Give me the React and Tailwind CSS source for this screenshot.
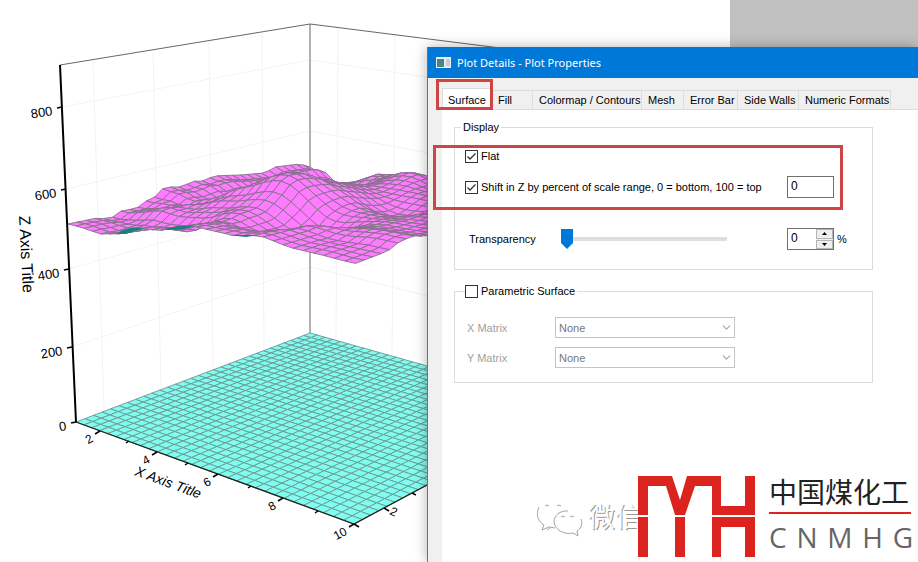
import { useState } from 'react';
import { ChevronDown } from 'lucide-react';

const CELLS = 31;

// Corners of the plot floor on screen: left, front, right, back
const LEFT = [76, 422];
const FRONT = [354, 524];
const RIGHT = [573, 407];
const BACK = [310, 333];

// Unit square -> floor quad (projective mapping)
const makeProjection = (p0, p1, p2, p3) => {
  const dx1 = p1[0] - p2[0];
  const dx2 = p3[0] - p2[0];
  const dy1 = p1[1] - p2[1];
  const dy2 = p3[1] - p2[1];
  const sx = p0[0] - p1[0] + p2[0] - p3[0];
  const sy = p0[1] - p1[1] + p2[1] - p3[1];
  const det = dx1 * dy2 - dx2 * dy1;
  const g = (sx * dy2 - dx2 * sy) / det;
  const h = (dx1 * sy - sx * dy1) / det;
  return (u, v) => {
    const w = g * u + h * v + 1;
    return [
      ((p1[0] - p0[0] + g * p1[0]) * u + (p3[0] - p0[0] + h * p3[0]) * v + p0[0]) / w,
      ((p1[1] - p0[1] + g * p1[1]) * u + (p3[1] - p0[1] + h * p3[1]) * v + p0[1]) / w,
    ];
  };
};

const floor = makeProjection(LEFT, FRONT, RIGHT, BACK);

// Surface outline along each side of the box
const edges = {
  leftFront: [[68, 224], [80, 227], [100, 234], [120, 234], [140, 228], [158, 231], [175, 228], [192, 226], [212, 231], [235, 236], [260, 236], [290, 248], [320, 255], [354, 264]],
  frontRight: [[354, 264], [388, 251], [400, 241], [414, 236], [427, 236], [573, 200]],
  leftBack: [[68, 224], [97, 218], [111, 219], [116, 213], [124, 210], [136, 209], [144, 202], [157, 196], [164, 187], [180, 187], [195, 181], [206, 181], [212, 176], [240, 175], [265, 173], [275, 167], [300, 164], [310, 167]],
  backRight: [[310, 167], [316, 172], [325, 172], [333, 180], [341, 187], [365, 188], [377, 182], [392, 176], [427, 180], [573, 200]],
};

const sample = (line, x) => {
  for (let i = 1; i < line.length; i++) {
    if (x <= line[i][0]) {
      const [x0, y0] = line[i - 1];
      const [x1, y1] = line[i];
      return y0 + ((y1 - y0) * (x - x0)) / (x1 - x0);
    }
  }
  return line[line.length - 1][1];
};

const leanX = (x) => x + (x - 310) * 0.034;

const edgeLift = (line, u, v) => {
  const [x, y] = floor(u, v);
  return y - sample(line, leanX(x));
};

// Hills and dips: centre on the floor, spread, height
const bumps = [
  { x: 290, y: 416, sx: 50, sy: 17, h: 23 },
  { x: 310, y: 452, sx: 62, sy: 16, h: -22 },
  { x: 175, y: 410, sx: 36, sy: 12, h: 12 },
  { x: 185, y: 438, sx: 36, sy: 12, h: -8 },
  { x: 412, y: 386, sx: 30, sy: 15, h: 9 },
  { x: 395, y: 424, sx: 40, sy: 14, h: -17 },
  { x: 325, y: 356, sx: 14, sy: 8, h: 6 },
  { x: 352, y: 374, sx: 18, sy: 10, h: -9 },
];

const surface = (u, v) => {
  const [x, y] = floor(u, v);
  const c00 = edgeLift(edges.leftFront, 0, 0);
  const c10 = edgeLift(edges.leftFront, 1, 0);
  const c01 = edgeLift(edges.leftBack, 0, 1);
  const c11 = edgeLift(edges.backRight, 1, 1);
  let lift =
    (1 - v) * edgeLift(edges.leftFront, u, 0) + v * edgeLift(edges.backRight, u, 1) +
    (1 - u) * edgeLift(edges.leftBack, 0, v) + u * edgeLift(edges.frontRight, 1, v) -
    ((1 - u) * (1 - v) * c00 + u * (1 - v) * c10 + (1 - u) * v * c01 + u * v * c11);
  const taper = Math.min(1, 8 * u, 8 * v, 8 * (1 - u), 8 * (1 - v));
  bumps.forEach((b) => {
    lift += taper * b.h * Math.exp(-(((x - b.x) / b.sx) ** 2) - ((y - b.y) / b.sy) ** 2);
  });
  lift += taper * 2 * Math.sin(u * 23 + v * 7) * Math.cos(v * 19);
  return [leanX(x), y - lift];
};

const toPoints = (pts) => pts.map(([x, y]) => `${x.toFixed(1)},${y.toFixed(1)}`).join(' ');

const buildCells = (fn) => {
  const cells = [];
  for (let j = CELLS - 1; j >= 0; j--) {
    for (let i = 0; i < CELLS; i++) {
      const [u0, u1, v0, v1] = [i / CELLS, (i + 1) / CELLS, j / CELLS, (j + 1) / CELLS];
      cells.push(toPoints([fn(u0, v0), fn(u1, v0), fn(u1, v1), fn(u0, v1)]));
    }
  }
  return cells;
};

const floorCells = buildCells(floor);
const surfaceCells = buildCells(surface);

const zTicks = [
  { label: '800', x: 62, y: 107 },
  { label: '600', x: 66, y: 189 },
  { label: '400', x: 69, y: 269 },
  { label: '200', x: 72, y: 347 },
  { label: '0', x: 76, y: 422 },
];

const xTicks = [
  { label: '2', x: 100, y: 431 },
  { label: '4', x: 157, y: 452 },
  { label: '6', x: 218, y: 474 },
  { label: '8', x: 283, y: 498 },
  { label: '10', x: 354, y: 524 },
];

const SurfacePlot = () => (
  <svg className="absolute left-0 top-0" width="600" height="562" viewBox="0 0 600 562" fontFamily="'Liberation Sans', Arial, sans-serif">
    {/* Wall grid */}
    <path
      d="M93 60L104 410M153 50L161 387M209 40L213 368M262 32L264 350M338 28L336 341M395 36L392 357
        M62 107L310 60L440 79M66 189L310 131L440 155M69 269L310 200L440 228M72 347L310 267L440 299"
      fill="none" stroke="#f3f3f3"
    />
    <path d="M60 65L310 24L500 48M310 24V333" fill="none" stroke="#666666" />

    <g fill="#7ffdee" stroke="#6d9696" strokeWidth="0.9">
      {floorCells.map((points, i) => <polygon key={i} points={points} />)}
    </g>
    <g fill="#ff7bff" stroke="#85708a" strokeWidth="0.9" strokeLinejoin="round">
      {surfaceCells.map((points, i) => <polygon key={i} points={points} />)}
    </g>
    {/* Underside showing through */}
    <path d="M116 234Q128 226 144 228Q134 231 126 234ZM165 229Q180 225 194 226Q186 230 168 230ZM228 235L258 235L246 237Z" fill="#16807f" />

    {/* Axes */}
    <path d="M60 65L76 422" stroke="#000" strokeWidth="2" />
    <path d="M76 422L354 524L500 446" fill="none" stroke="#222" strokeWidth="1.3" />
    {zTicks.map((t) => (
      <g key={t.label}>
        <path d={`M${t.x} ${t.y}l-5 1`} stroke="#000" strokeWidth="1.5" />
        <text x={t.x - 9} y={t.y + 8} textAnchor="end" fontSize="13" transform={`rotate(-9 ${t.x - 9} ${t.y + 8})`}>{t.label}</text>
      </g>
    ))}
    {xTicks.map((t) => (
      <g key={t.label}>
        <path d={`M${t.x} ${t.y}l-5 3`} stroke="#000" strokeWidth="1.5" />
        <text x={t.x - 6} y={t.y + 10} textAnchor="end" fontSize="12" transform={`rotate(-28 ${t.x - 6} ${t.y + 10})`}>{t.label}</text>
      </g>
    ))}
    <path d="M129 441l-3 2M188 463l-3 2M251 486l-3 2M318 511l-3 2M384 508l5 3M412 493l4 2M354 524l5 3" stroke="#000" strokeWidth="1.5" />
    <text x="389" y="514" fontSize="12" transform="rotate(25 389 514)">2</text>
    <text x="19" y="216" fontSize="16" transform="rotate(87 19 216)">Z Axis Title</text>
    <text x="134" y="475" fontSize="14" fontStyle="italic" transform="rotate(20 134 475)">X Axis Title</text>
  </svg>
);

const Checkbox = ({ label, defaultChecked }) => (
  <label className="flex items-center gap-[3px]">
    <span className="relative flex h-[13px] w-[13px]">
      <input
        type="checkbox"
        defaultChecked={defaultChecked}
        className="peer h-[13px] w-[13px] appearance-none border border-[#333333] bg-white"
      />
      <svg className="pointer-events-none absolute inset-0 hidden peer-checked:block" width="13" height="13" viewBox="0 0 13 13">
        <path d="M2.5 6.5L5 9L10.5 3.5" fill="none" stroke="#333" strokeWidth="1.3" />
      </svg>
    </span>
    {label}
  </label>
);

const tabs = [
  { name: 'Fill', width: 'w-[41px]' },
  { name: 'Colormap / Contours', width: 'w-[109px]' },
  { name: 'Mesh', width: 'w-[42px]' },
  { name: 'Error Bar', width: 'w-[54px]' },
  { name: 'Side Walls', width: 'w-[61px]' },
  { name: 'Numeric Formats', width: 'w-[92px]' },
];

const MatrixRow = ({ id, label }) => (
  <div className="flex h-[21px] items-center">
    <label htmlFor={id} className="w-[88px] text-[#a0a0a0]">{label}</label>
    <div className="relative w-[180px]">
      <select id={id} disabled className="block h-[21px] w-full appearance-none border border-[#c4c4c4] bg-white pl-[3px] text-[#777777] opacity-100">
        <option>None</option>
      </select>
      <ChevronDown className="pointer-events-none absolute right-[2px] top-[4px] h-[13px] w-[13px] text-[#a8a8a8]" strokeWidth={2} />
    </div>
  </div>
);

const PlotDetails = () => {
  const [transparency, setTransparency] = useState(0);

  return (
    <section className="absolute bottom-0 left-[427px] right-0 top-[47px] flex flex-col border-l border-[#2a84d6] bg-[#f0f0f0] text-[11px] leading-4 shadow-[0_0_12px_rgba(0,0,0,0.3)]">
      <header className="flex h-[31px] shrink-0 items-center gap-[6px] bg-[#0078d7] pl-2 font-['Noto_Sans',sans-serif] text-[11px] text-white">
        <svg width="15" height="11" viewBox="0 0 15 11">
          <rect width="15" height="11" fill="#e8eef0" />
          <rect x="1" y="2" width="7" height="8" fill="#4a8583" />
          <rect x="10" y="2" width="4" height="7" fill="#c3cfd4" />
        </svg>
        <h1>Plot Details - Plot Properties</h1>
      </header>

      {/* Tabs */}
      <div role="tablist" className="ml-[14px] flex h-8 shrink-0 items-end border-b border-[#dcdcdc]">
        <button role="tab" aria-selected="true" className="-mb-px h-[22px] w-[50px] border border-b-0 border-[#dcdcdc] bg-white">Surface</button>
        {tabs.map((tab) => (
          <button key={tab.name} role="tab" aria-selected="false" className={`h-[19px] whitespace-nowrap border-r border-t border-[#dcdcdc] pl-[6px] text-left ${tab.width}`}>
            {tab.name}
          </button>
        ))}
      </div>

      <div className="ml-[14px] flex flex-1 flex-col gap-[13px] bg-white pl-3 pr-[45px] pt-[9px]">
        <fieldset className="flex flex-col border border-[#dcdcdc] px-[10px] pb-[19px] pt-[10px]">
          <legend className="-ml-1 px-[2px]">Display</legend>
          <div className="flex h-[22px] items-center">
            <Checkbox label="Flat" defaultChecked />
          </div>
          <div className="mt-[9px] flex h-[22px] items-center justify-between pr-7">
            <Checkbox label="Shift in Z by percent of scale range, 0 = bottom, 100 = top" defaultChecked />
            <input aria-label="Shift percent" defaultValue="0" className="h-[22px] w-[47px] border border-[#707070] bg-white px-[3px] pb-[2px] text-xs" />
          </div>
          <div className="mt-[30px] flex h-[22px] items-center">
            <label htmlFor="transparency" className="w-24 pl-1">Transparency</label>
            <input
              id="transparency"
              type="range"
              min="0"
              max="100"
              value={transparency}
              onChange={(e) => setTransparency(Number(e.target.value))}
              className="h-5 w-[166px] appearance-none bg-transparent [&::-webkit-slider-runnable-track]:h-1 [&::-webkit-slider-runnable-track]:bg-[#dedede] [&::-webkit-slider-thumb]:-mt-2 [&::-webkit-slider-thumb]:h-5 [&::-webkit-slider-thumb]:w-3 [&::-webkit-slider-thumb]:appearance-none [&::-webkit-slider-thumb]:bg-[#0078d7] [&::-webkit-slider-thumb]:[clip-path:polygon(0_0,100%_0,100%_70%,50%_100%,0_70%)]"
            />
            <div className="ml-auto flex h-[22px] w-[47px] border border-[#707070]">
              <input
                aria-label="Transparency percent"
                value={transparency}
                onChange={(e) => setTransparency(Number(e.target.value) || 0)}
                className="w-[28px] bg-white px-[3px] pb-[2px] text-xs"
              />
              <div className="flex w-[17px] flex-col gap-px bg-[#f0f0f0]">
                <button aria-label="Increase" onClick={() => setTransparency((v) => Math.min(100, v + 1))} className="flex flex-1 items-center justify-center border border-[#b5b5b5] bg-[#eeeeee]">
                  <svg width="5" height="3" viewBox="0 0 5 3"><path d="M0 3L2.5 0L5 3Z" /></svg>
                </button>
                <button aria-label="Decrease" onClick={() => setTransparency((v) => Math.max(0, v - 1))} className="flex flex-1 items-center justify-center border border-[#b5b5b5] bg-[#eeeeee]">
                  <svg width="5" height="3" viewBox="0 0 5 3"><path d="M0 0L2.5 3L5 0Z" /></svg>
                </button>
              </div>
            </div>
            <span className="w-7 pl-[3px]">%</span>
          </div>
        </fieldset>

        <fieldset className="flex flex-col gap-[9px] border border-[#dcdcdc] px-3 pb-[14px] pt-[18px]">
          <legend className="-ml-[2px] pr-[2px]">
            <Checkbox label="Parametric Surface" />
          </legend>
          <MatrixRow id="x-matrix" label="X Matrix" />
          <MatrixRow id="y-matrix" label="Y Matrix" />
        </fieldset>
      </div>

      {/* Highlight frames */}
      <div className="pointer-events-none absolute left-2 top-8 h-[31px] w-[57px] border-3 border-[#d04444]" />
      <div className="pointer-events-none absolute left-[5px] top-[98px] h-[65px] w-[410px] border-3 border-[#d04444]" />
    </section>
  );
};

const Watermark = () => (
  <div className="absolute bottom-0 right-0 flex h-[90px] w-[381px] font-['Liberation_Sans','Noto_Sans_CJK_SC',sans-serif]">
    <div className="mt-[26px] flex h-10 w-[101px] shrink-0 items-center gap-[5px]">
      <svg className="shrink-0" width="46" height="38" viewBox="0 0 46 38" fill="none" stroke="#a3a3a3">
        <path d="M2 8C-2 17 2 23 7 26L5 31L12 28L18 29M8 7q2-2 4 0M20 7q2-2 4 0M10 31l3-2" />
        <path d="M31 12C23 11 17 17 17 23C18 31 27 36 36 34L41 37L40 32C44 30 46 25 44 20" />
        <path d="M24 18q2-2 4 0M33 18q2-2 4 0" />
      </svg>
      <span className="shrink-0 text-[27px] leading-10 text-[#fdfdfd] [text-shadow:1px_1px_0_#999999]">微信</span>
    </div>
    <div className="relative flex flex-1 gap-[14px] bg-white pt-1">
      <svg className="shrink-0" width="117" height="82" viewBox="0 0 117 82" fill="#dc241f">
        <path d="M0 0H34L42 24L49 0H83V30H107V0H117V39H74V10H57L47 39H37L28 10H10V39H0Z" />
        <path d="M0 41H10V81H0ZM37 41H47V81H37ZM74 41H117V81H107V51H83V81H74Z" />
      </svg>
      <div className="flex w-[144px] flex-col">
        <span className="h-9 whitespace-nowrap text-[28px] leading-9 text-[#222222]">中国煤化工</span>
        <span className="h-[2px] w-[142px] bg-[#dc241f]" />
        <span className="flex h-9 justify-between font-['Open_Sans',sans-serif] text-[28px] leading-[46px] text-[#666666]">
          {['C', 'N', 'M', 'H', 'G'].map((c) => <span key={c}>{c}</span>)}
        </span>
      </div>
    </div>
  </div>
);

const App = () => (
  <main className="relative min-h-screen overflow-hidden bg-white font-['Liberation_Sans',Arial,sans-serif] text-black">
    <SurfacePlot />
    <div className="ml-[730px] h-12 bg-[#c0c0c0]" />
    <PlotDetails />
    <Watermark />
  </main>
);

export default App;
